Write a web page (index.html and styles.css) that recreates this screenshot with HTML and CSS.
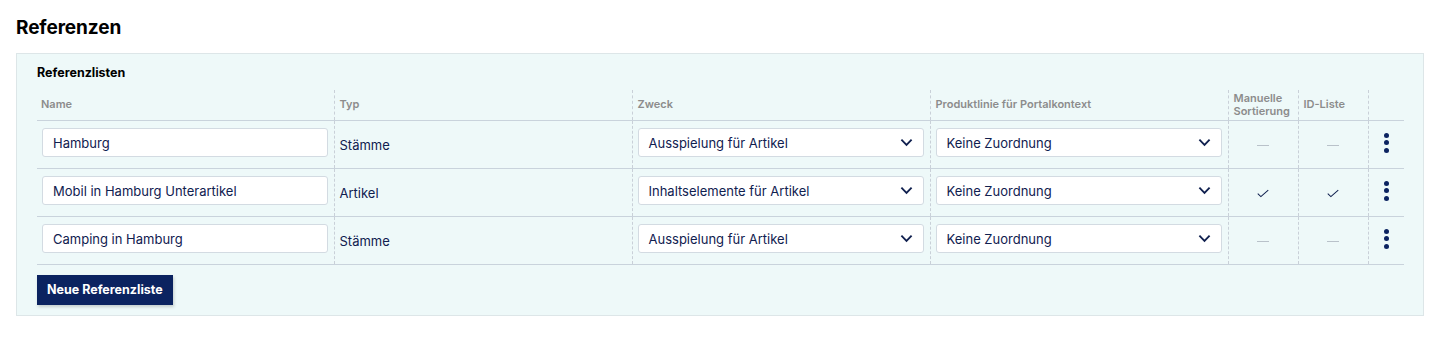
FILE: index.html
```html
<!DOCTYPE html>
<html lang="de">
<head>
<meta charset="utf-8">
<title>Referenzen</title>
<link rel="stylesheet" href="styles.css">
</head>
<body>
<h1 class="page-title">Referenzen</h1>
<section class="panel">
  <h2 class="panel-title">Referenzlisten</h2>
  <table class="ref-table">
    <colgroup>
      <col class="c-name"><col class="c-typ"><col class="c-zweck"><col class="c-prod"><col class="c-flag"><col class="c-flag"><col class="c-act">
    </colgroup>
    <thead>
      <tr>
        <th>Name</th>
        <th>Typ</th>
        <th>Zweck</th>
        <th>Produktlinie für Portalkontext</th>
        <th>Manuelle Sortierung</th>
        <th>ID-Liste</th>
        <th></th>
      </tr>
    </thead>
    <tbody>
      <tr>
        <td class="cell-field"><div class="field">Hamburg</div></td>
        <td class="cell-text">Stämme</td>
        <td class="cell-field"><div class="field select">Ausspielung für Artikel<svg class="chev" viewBox="0 0 14 9"><path d="M1.5 1.5L7 7L12.5 1.5"/></svg></div></td>
        <td class="cell-field"><div class="field select">Keine Zuordnung<svg class="chev" viewBox="0 0 14 9"><path d="M1.5 1.5L7 7L12.5 1.5"/></svg></div></td>
        <td class="cell-icon"><span class="dash"></span></td>
        <td class="cell-icon"><span class="dash"></span></td>
        <td class="cell-icon"><span class="kebab"><i></i><i></i><i></i></span></td>
      </tr>
      <tr>
        <td class="cell-field"><div class="field">Mobil in Hamburg Unterartikel</div></td>
        <td class="cell-text">Artikel</td>
        <td class="cell-field"><div class="field select">Inhaltselemente für Artikel<svg class="chev" viewBox="0 0 14 9"><path d="M1.5 1.5L7 7L12.5 1.5"/></svg></div></td>
        <td class="cell-field"><div class="field select">Keine Zuordnung<svg class="chev" viewBox="0 0 14 9"><path d="M1.5 1.5L7 7L12.5 1.5"/></svg></div></td>
        <td class="cell-icon"><svg class="check" viewBox="0 0 13 9"><path d="M0.8 4.6L4.2 7.8L12.2 0.8"/></svg></td>
        <td class="cell-icon"><svg class="check" viewBox="0 0 13 9"><path d="M0.8 4.6L4.2 7.8L12.2 0.8"/></svg></td>
        <td class="cell-icon"><span class="kebab"><i></i><i></i><i></i></span></td>
      </tr>
      <tr>
        <td class="cell-field"><div class="field">Camping in Hamburg</div></td>
        <td class="cell-text">Stämme</td>
        <td class="cell-field"><div class="field select">Ausspielung für Artikel<svg class="chev" viewBox="0 0 14 9"><path d="M1.5 1.5L7 7L12.5 1.5"/></svg></div></td>
        <td class="cell-field"><div class="field select">Keine Zuordnung<svg class="chev" viewBox="0 0 14 9"><path d="M1.5 1.5L7 7L12.5 1.5"/></svg></div></td>
        <td class="cell-icon"><span class="dash"></span></td>
        <td class="cell-icon"><span class="dash"></span></td>
        <td class="cell-icon"><span class="kebab"><i></i><i></i><i></i></span></td>
      </tr>
    </tbody>
  </table>
  <button class="btn-primary" type="button">Neue Referenzliste</button>
</section>
</body>
</html>
```
FILE: styles.css
```css
* { box-sizing: border-box; }
html, body { margin: 0; background: #fff; }
body {
  padding: 16px 10px 0 16px;
  font-family: Inter, "Liberation Sans", Arial, sans-serif;
  color: #10204f;
}
.page-title {
  margin: 0 0 13px;
  font-size: 19px;
  line-height: 24px;
  font-weight: 700;
  color: #000;
  letter-spacing: -0.1px;
}
.panel {
  width: 1408px;
  background: #eef9f9;
  border: 1px solid #dde6e8;
  padding: 10px 20px 10px 20px;
}
.panel-title {
  margin: 0 0 8px;
  font-size: 12.5px;
  line-height: 18px;
  font-weight: 700;
  color: #000;
}
.ref-table {
  width: 1367px;
  border-collapse: collapse;
  table-layout: fixed;
}
.c-name { width: 297px; }
.c-typ { width: 298px; }
.c-zweck { width: 298px; }
.c-prod { width: 298px; }
.c-flag { width: 70px; }
.c-act { width: 36px; }

.ref-table th {
  height: 30px;
  padding: 0 5px;
  text-align: left;
  vertical-align: middle;
  font-size: 11px;
  line-height: 13px;
  font-weight: 600;
  color: #8c8c8c;
  border-bottom: 1px solid #c9d3dc;
  border-left: 1px dashed #c9d0d8;
}
.ref-table th:first-child { border-left: none; padding-left: 4px; }
.ref-table td {
  height: 48px;
  border-bottom: 1px solid #c9d3dc;
  border-left: 1px dashed #c9d0d8;
  font-size: 13px;
  color: #10204f;
}
.ref-table td:first-child { border-left: none; }
.cell-field {
  padding: 0 6px 3px 5px;
  vertical-align: middle;
}
.cell-text {
  padding: 2px 5px 0 5px;
  vertical-align: middle;
}
.cell-icon {
  padding: 0;
  text-align: center;
  vertical-align: middle;
}
.field {
  height: 29px;
  background: #fff;
  border: 1px solid #d3dbe2;
  border-radius: 3px;
  padding: 0 10px;
  display: flex;
  align-items: center;
  font-size: 13px;
  color: #10204f;
}
.select { justify-content: space-between; padding-right: 10px; }
.chev {
  width: 13px;
  height: 9px;
  fill: none;
  stroke: #10204f;
  stroke-width: 2;
}
.dash {
  display: inline-block;
  width: 12px;
  height: 1px;
  background: #b9c2ca;
  vertical-align: middle;
}
.check {
  width: 12px;
  height: 9px;
  fill: none;
  stroke: #10204f;
  stroke-width: 1.1;
  vertical-align: middle;
}
.kebab {
  display: inline-flex;
  flex-direction: column;
  gap: 2.5px;
  vertical-align: middle;
  margin-bottom: 3px;
}
.kebab i {
  display: block;
  width: 5px;
  height: 5px;
  border-radius: 50%;
  background: #0c2461;
}
.btn-primary {
  margin-top: 10px;
  height: 30px;
  padding: 0 10px;
  background: #0b2360;
  color: #fff;
  border: none;
  border-radius: 0;
  font-family: Inter, "Liberation Sans", Arial, sans-serif;
  font-size: 12.5px;
  font-weight: 700;
  box-shadow: 1px 2px 3px rgba(0, 0, 0, 0.18);
  display: block;
}
```
